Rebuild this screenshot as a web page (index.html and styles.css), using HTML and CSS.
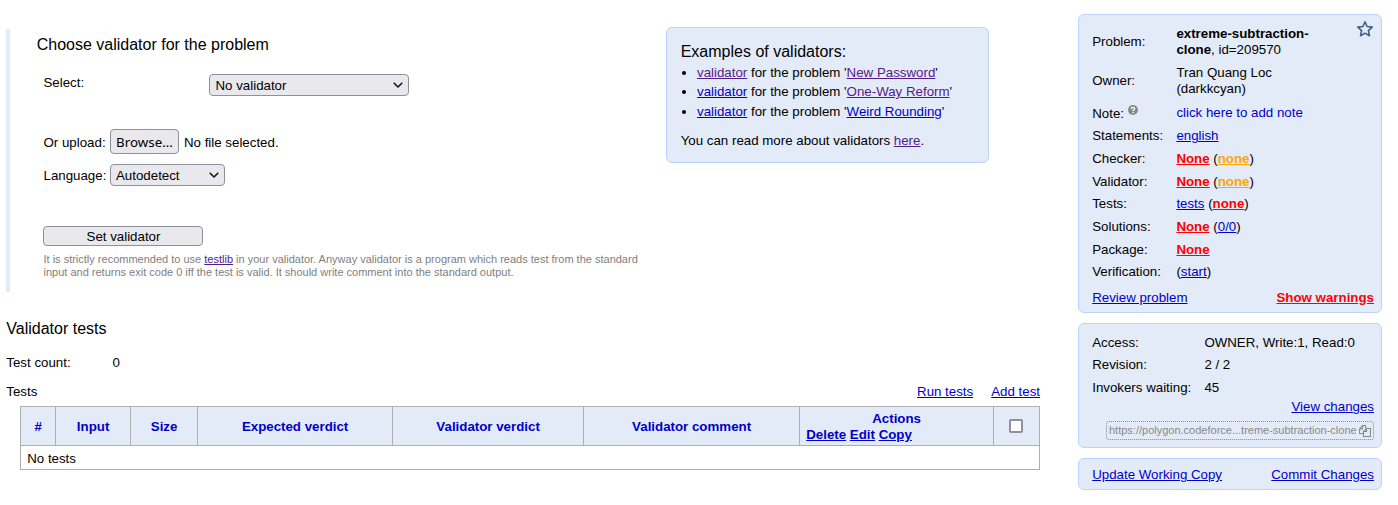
FILE: index.html
```html
<!DOCTYPE html>
<html lang="en">
<head>
<meta charset="utf-8">
<title>Validator</title>
<link rel="stylesheet" href="styles.css">
</head>
<body>
<div class="page">
  <main class="content">
    <div class="top">
      <section class="chooser">
        <h2 class="title">Choose validator for the problem</h2>
        <div class="field field-select"><span class="label-wide">Select:</span><span class="select select-wide">No validator<svg class="chevron" width="10" height="7" viewBox="0 0 10 7"><path d="M1.2 1.2 5 5 8.800 1.200" fill="none" stroke="#15141a" stroke-width="1.600" stroke-linecap="round" stroke-linejoin="round"/></svg></span></div>
        <div class="field field-upload"><span class="label">Or upload:</span><span class="browse">Browse...</span><span class="filename">No file selected.</span></div>
        <div class="field field-lang"><span class="label">Language:</span><span class="select select-lang">Autodetect<svg class="chevron" width="10" height="7" viewBox="0 0 10 7"><path d="M1.2 1.2 5 5 8.800 1.200" fill="none" stroke="#15141a" stroke-width="1.600" stroke-linecap="round" stroke-linejoin="round"/></svg></span></div>
        <button class="submit">Set validator</button>
        <p class="hint">It is strictly recommended to use <a class="visited" href="#">testlib</a> in your validator. Anyway validator is a program which reads test from the standard<br>input and returns exit code 0 iff the test is valid. It should write comment into the standard output.</p>
      </section>
      <section class="examples">
        <h2 class="title">Examples of validators:</h2>
        <ul class="list">
          <li><a class="visited" href="#">validator</a> for the problem '<a class="visited" href="#">New Password</a>'</li>
          <li><a href="#">validator</a> for the problem '<a class="visited" href="#">One-Way Reform</a>'</li>
          <li><a href="#">validator</a> for the problem '<a href="#">Weird Rounding</a>'</li>
        </ul>
        <p class="more">You can read more about validators <a class="visited" href="#">here</a>.</p>
      </section>
    </div>
    <h2 class="title tests-title">Validator tests</h2>
    <div class="count"><span>Test count:</span><span>0</span></div>
    <div class="bar"><span>Tests</span><span class="bar-links"><a href="#">Run tests</a><a href="#">Add test</a></span></div>
    <table class="tests">
      <colgroup><col class="c1"><col class="c2"><col class="c3"><col class="c4"><col class="c5"><col class="c6"><col class="c7"><col class="c8"></colgroup>
      <tr><th>#</th><th>Input</th><th>Size</th><th>Expected verdict</th><th>Validator verdict</th><th>Validator comment</th><th>Actions<div class="actions"><a href="#">Delete</a> <a href="#">Edit</a> <a href="#">Copy</a></div></th><th class="check"><span class="checkbox"></span></th></tr>
      <tr><td colspan="8">No tests</td></tr>
    </table>
  </main>
  <aside class="side">
    <section class="card card-problem">
      <svg class="star" width="18" height="18" viewBox="0 0 18 18"><path d="M9 1.800 11.100 6.500 16.200 7.100 12.400 10.600 13.500 15.700 9 13.100 4.500 15.700 5.600 10.600 1.800 7.100 6.900 6.500Z" fill="none" stroke="#445e8c" stroke-width="1.600" stroke-linejoin="round"/></svg>
      <dl class="info">
        <dt>Problem:</dt><dd><b>extreme-subtraction-<br>clone</b>, id=209570</dd>
        <dt>Owner:</dt><dd>Tran Quang Loc<br>(darkkcyan)</dd>
        <dt class="note">Note: <svg class="help" width="10" height="10" viewBox="0 0 10 10"><circle cx="5" cy="5" r="5" fill="#888"/><path d="M3.300 3.900C3.300 1.800 6.700 1.800 6.700 3.800C6.700 4.900 5.100 4.900 5.100 6" fill="none" stroke="#fff" stroke-width="1.300"/><rect x="4.400" y="6.900" width="1.400" height="1.300" fill="#fff"/></svg></dt><dd class="note"><span class="edit">click here to add note</span></dd>
        <dt>Statements:</dt><dd><a href="#">english</a></dd>
        <dt>Checker:</dt><dd><a class="red" href="#">None</a> (<a class="orange" href="#">none</a>)</dd>
        <dt>Validator:</dt><dd><a class="red" href="#">None</a> (<a class="orange" href="#">none</a>)</dd>
        <dt>Tests:</dt><dd><a href="#">tests</a> (<a class="red" href="#">none</a>)</dd>
        <dt>Solutions:</dt><dd><a class="red" href="#">None</a> (<a href="#">0/0</a>)</dd>
        <dt>Package:</dt><dd><a class="red" href="#">None</a></dd>
        <dt>Verification:</dt><dd>(<a href="#">start</a>)</dd>
      </dl>
      <div class="links review"><a href="#">Review problem</a><a class="red" href="#">Show warnings</a></div>
    </section>
    <section class="card card-access">
      <dl class="info info-access">
        <dt>Access:</dt><dd>OWNER, Write:1, Read:0</dd>
        <dt>Revision:</dt><dd>2 / 2</dd>
        <dt>Invokers waiting:</dt><dd>45</dd>
      </dl>
      <div class="view"><a href="#">View changes</a></div>
      <div class="url"><span class="address">https://polygon.codeforce...treme-subtraction-clone</span><svg width="12" height="12" viewBox="0 0 12 12"><path d="M4.500 8.500H.5V4L3.500 .5H6.500V3M.5 4H3.500V.5M7.500 3.500H11.500V11.500H4.500V6.500L7.500 3.500V6.500H4.500" fill="none" stroke="#888" stroke-width="1.100"/></svg></div>
    </section>
    <section class="card card-commit"><div class="links"><a href="#">Update Working Copy</a><a href="#">Commit Changes</a></div></section>
  </aside>
</div>
</body>
</html>
```

FILE: styles.css
```css
* { box-sizing: border-box; }
body { margin: 0; background: #fff; color: #000; font: 13.300px/16px "Liberation Sans", Arial, sans-serif; }
a { color: #0000cc; text-decoration: underline; }
a.visited { color: #551a8b; }
a.red { color: #f00; font-weight: bold; }
a.orange { color: orange; font-weight: bold; }
.page { display: flex; height: 505px; padding-left: 6px; }
.content { width: 1034px; padding-top: 27px; }
.top { display: flex; align-items: flex-start; height: 265px; }
.title { margin: 0; font-size: 16px; line-height: 20px; font-weight: normal; }
.chooser { width: 660px; height: 263px; margin-top: 2px; border-left: 4px solid #e4ebf8; padding: 6px 0 0 26.700px; }
.field { display: flex; align-items: center; margin-left: 6.800px; }
.field-select { height: 22px; margin-top: 19px; }
.label-wide { width: 165.500px; padding-bottom: 4px; }
.field-upload { height: 25px; margin-top: 33px; }
.field-lang { height: 22px; margin-top: 10px; }
.label { width: 66.500px; padding-top: 2px; }
.select, .browse, .submit { border: 1px solid #8f8f9d; border-radius: 4px; background: #e9e9ed; color: #000; }
.select { display: flex; align-items: center; justify-content: space-between; height: 22px; padding: 1px 5px 0; }
.select-wide { width: 200px; padding-left: 5.500px; }
.select-lang { width: 115px; }
.browse { width: 69px; height: 25px; text-align: center; font: 13.333px/25px "Noto Sans", sans-serif; }
.filename { margin-left: 5px; padding-top: 2px; }
.submit { display: block; width: 160px; height: 20px; margin: 40px 0 0 6.300px; padding: 1px 0 0 1px; font: 13.300px/16px "Liberation Sans", Arial, sans-serif; }
.hint { margin: 7px 0 0 6.800px; font-size: 11px; line-height: 13px; color: #808080; white-space: nowrap; }
.examples { width: 323px; height: 136px; padding: 14px 14px 0 13.700px; border: 1px solid #b9d3fb; border-radius: 6px; background: #e4ebf8; }
.list { margin: 0; padding: 1px 0 0 16.300px; }
.list li { height: 19.400px; line-height: 19px; }
.more { margin: 11.800px 0 0; }
.tests-title { margin-top: 27px; padding-left: .3px; }
.count { display: flex; margin-top: 16px; padding-left: .3px; }
.count span:first-child { width: 106.200px; }
.bar { display: flex; justify-content: space-between; margin-top: 13px; padding-left: .3px; }
.bar-links { display: flex; gap: 18px; }
.tests { width: 1020px; margin: 6px 0 0 14px; border-collapse: collapse; table-layout: fixed; }
.tests th, .tests td { border: 1px solid #afafaf; padding: 0 6px 0 6.200px; }
.tests th { height: 39px; padding-top: 2px; background: #e4ebf8; color: #0000cc; }
.tests td { height: 24px; padding-top: 2px; }
.c1 { width: 35px; } .c2 { width: 75px; } .c3 { width: 67px; } .c4 { width: 195px; }
.c5 { width: 191px; } .c6 { width: 216px; } .c7 { width: 194px; } .c8 { width: 46px; }
.actions { text-align: left; }
.tests .check { padding: 0 7px 0 6px; }
.checkbox { display: block; width: 14px; height: 14px; margin: 0 auto; border: 2px solid #8f8f9d; border-radius: 2px; background: #fff; }
.side { width: 304px; margin-left: 38px; padding-top: 14px; display: flex; flex-direction: column; gap: 10px; }
.card { position: relative; border: 1px solid #b9d3fb; border-radius: 6px; background: #e4ebf8; padding: 0 7px 0 13.200px; }
.card-problem { height: 299px; padding-top: 8.050px; }
.star { position: absolute; right: 7px; top: 5px; }
.info { display: grid; grid-template-columns: 84.200px 1fr; margin: 0; }
.info dt, .info dd { margin: 0; padding: 3.333px 0; display: block; align-self: center; white-space: nowrap; }
.info .note { height: 24.600px; padding-top: 5px; }
.help { vertical-align: 3px; }
.edit { color: #0000cc; }
.links { display: flex; justify-content: space-between; }
.review { margin-top: 6.500px; }
.card-access { height: 125px; padding-top: 7.500px; }
.info-access { grid-template-columns: 112.200px 1fr; }
.view { text-align: right; }
.url { display: flex; align-items: center; justify-content: space-between; width: 268px; height: 19px; margin: 6px 0 0 auto; padding: 0 2px; border: 1px dotted #888; border-radius: 3px; color: #888; font-size: 11px; }
.address { padding-bottom: 2px; }
.card-commit { height: 32px; padding-top: 8px; }
```
